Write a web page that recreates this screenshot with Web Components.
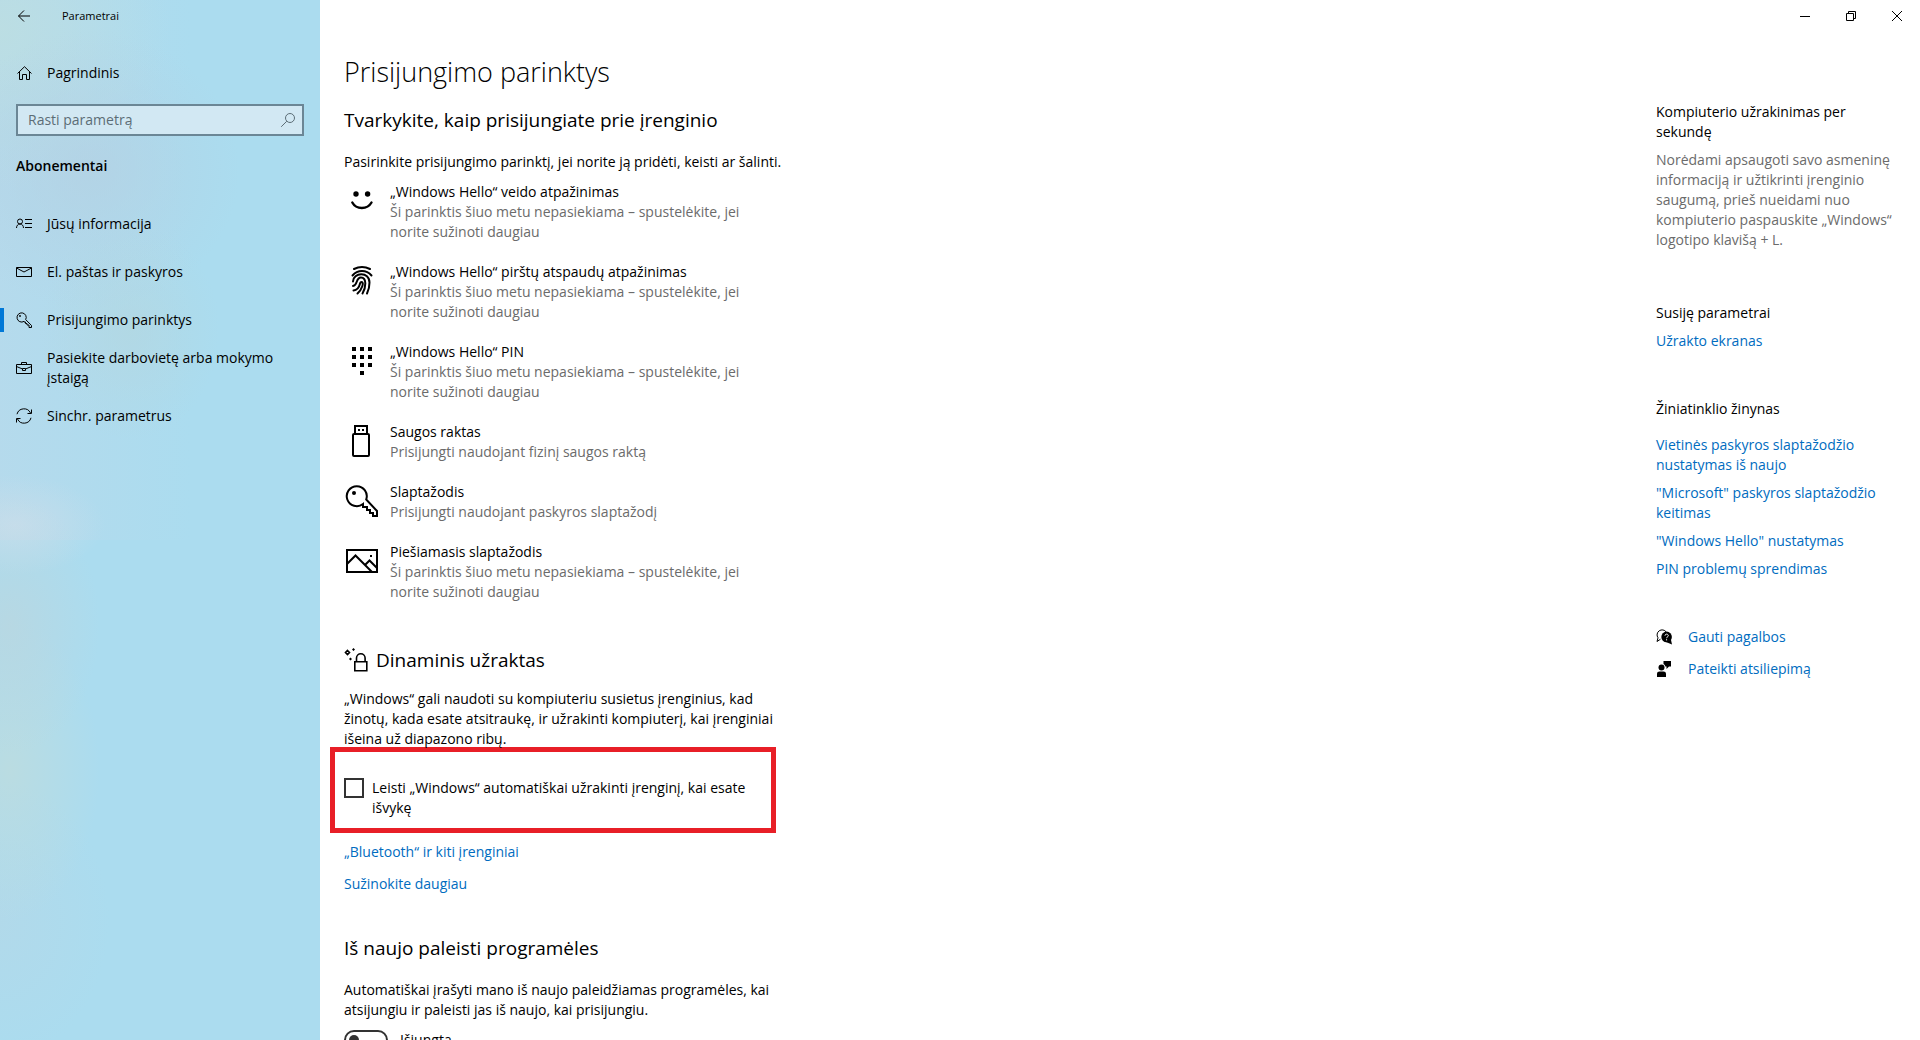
<!DOCTYPE html>
<html lang="lt">
<head>
<meta charset="utf-8">
<meta name="viewport" content="width=device-width, initial-scale=1">
<title>Parametrai</title>
<style>
  html, body {
    height: 100%;
    margin: 0;
  }

  body {
    font-family: "Open Sans", "Noto Sans", sans-serif;
    font-size: 14px;
    line-height: 20px;
    color: #000;
    background: #fff;
    overflow: hidden;
    --link: #006cc0;
    --muted: #6b6b6b;
  }
</style>
</head>
<body>

<settings-window>
  <settings-sidebar slot="sidebar">
    <nav-item icon="home" slot="home">Pagrindinis</nav-item>
    <nav-item icon="contact">Jūsų informacija</nav-item>
    <nav-item icon="mail">El. paštas ir paskyros</nav-item>
    <nav-item icon="key" active>Prisijungimo parinktys</nav-item>
    <nav-item icon="briefcase">Pasiekite darbovietę arba mokymo įstaigą</nav-item>
    <nav-item icon="sync">Sinchr. parametrus</nav-item>
  </settings-sidebar>

  <span slot="title">Prisijungimo parinktys</span>

  <settings-section>
    <span slot="heading">Tvarkykite, kaip prisijungiate prie įrenginio</span>
    <span slot="intro">Pasirinkite prisijungimo parinktį, jei norite ją pridėti, keisti ar šalinti.</span>
    <signin-option icon="face">„Windows Hello“ veido atpažinimas
      <span slot="note">Ši parinktis šiuo metu nepasiekiama – spustelėkite, jei norite sužinoti daugiau</span>
    </signin-option>
    <signin-option icon="fingerprint">„Windows Hello“ pirštų atspaudų atpažinimas
      <span slot="note">Ši parinktis šiuo metu nepasiekiama – spustelėkite, jei norite sužinoti daugiau</span>
    </signin-option>
    <signin-option icon="pin">„Windows Hello“ PIN
      <span slot="note">Ši parinktis šiuo metu nepasiekiama – spustelėkite, jei norite sužinoti daugiau</span>
    </signin-option>
    <signin-option icon="usb">Saugos raktas
      <span slot="note">Prisijungti naudojant fizinį saugos raktą</span>
    </signin-option>
    <signin-option icon="bigkey">Slaptažodis
      <span slot="note">Prisijungti naudojant paskyros slaptažodį</span>
    </signin-option>
    <signin-option icon="picture">Piešiamasis slaptažodis
      <span slot="note">Ši parinktis šiuo metu nepasiekiama – spustelėkite, jei norite sužinoti daugiau</span>
    </signin-option>
  </settings-section>

  <settings-section icon="lock">
    <span slot="heading">Dinaminis užraktas</span>
    <span slot="intro">„Windows“ gali naudoti su kompiuteriu susietus įrenginius, kad žinotų, kada esate atsitraukę, ir užrakinti kompiuterį, kai įrenginiai išeina už diapazono ribų.</span>
    <check-option>Leisti „Windows“ automatiškai užrakinti įrenginį, kai esate išvykę</check-option>
    <text-link wide>„Bluetooth“ ir kiti įrenginiai</text-link>
    <text-link wide>Sužinokite daugiau</text-link>
  </settings-section>

  <settings-section>
    <span slot="heading">Iš naujo paleisti programėles</span>
    <span slot="intro">Automatiškai įrašyti mano iš naujo paleidžiamas programėles, kai atsijungiu ir paleisti jas iš naujo, kai prisijungiu.</span>
    <toggle-switch>Išjungta</toggle-switch>
  </settings-section>

  <help-group slot="aside">
    <span slot="heading">Kompiuterio užrakinimas per sekundę</span>
    <help-note>Norėdami apsaugoti savo asmeninę informaciją ir užtikrinti įrenginio saugumą, prieš nueidami nuo kompiuterio paspauskite „Windows“ logotipo klavišą + L.</help-note>
  </help-group>
  <help-group slot="aside">
    <span slot="heading">Susiję parametrai</span>
    <text-link>Užrakto ekranas</text-link>
  </help-group>
  <help-group slot="aside" spaced>
    <span slot="heading">Žiniatinklio žinynas</span>
    <text-link>Vietinės paskyros slaptažodžio nustatymas iš naujo</text-link>
    <text-link>"Microsoft" paskyros slaptažodžio keitimas</text-link>
    <text-link>"Windows Hello" nustatymas</text-link>
    <text-link>PIN problemų sprendimas</text-link>
  </help-group>
  <help-group slot="aside">
    <text-link icon="help" wide>Gauti pagalbos</text-link>
    <text-link icon="feedback" wide>Pateikti atsiliepimą</text-link>
  </help-group>
</settings-window>

<script>
// name: [size, shapes]
const icons = {
  back: [16, '<path d="M14 8H2.5M8 2.5 2.5 8 8 13.5"/>'],
  minimize: [10, '<path d="M0 5.5h10"/>'],
  restore: [10, '<path d="M.5 2.5h7v7h-7zM2.5 2.5v-2h7v7h-2"/>'],
  close: [10, '<path d="M0 0l10 10M10 0 0 10"/>'],
  home: [16, '<path d="M1.5 8.5l7-6.8 7 6.8M3.5 7v7.5h3v-5h4v5h3V7"/>'],
  search: [16, '<circle cx="10" cy="6" r="4.5"/><path d="M6.8 9.2 1.2 14.8"/>'],
  contact: [16, '<circle cx="4" cy="5.5" r="2.5"/><path d="M.5 12c0-2.4 1.5-4 3.5-4s3.5 1.6 3.5 4M9 3.5h7M9 7.5h7M9 11.5h7"/>'],
  mail: [16, '<path d="M.5 3.5h15v9H.5zM.5 4 8 8l7.5-4"/>'],
  key: [16, '<path d="M8 10h1.5v1.5H11V13h2v2.5h2.5v-2L9.7 7.6A4.6 4.6 0 1 0 8 9.4z"/><circle cx="4" cy="4" r=".6"/>'],
  briefcase: [16, '<path d="M.5 4.5h15v9H.5zM5.5 4.5v-2h5v2M.5 6.5l6 2.5M15.5 6.5l-6 2.5M6.5 8.5h3v2h-3z"/>'],
  sync: [16, '<path d="M1 6.2A7.2 7.2 0 0 1 14.5 5M15.5 1.5v4h-4M15 9.8A7.2 7.2 0 0 1 1.5 11M.5 14.5v-4h4"/>'],
  face: [32, '<g fill="currentColor" stroke="none"><circle cx="10" cy="9" r="2.7"/><circle cx="21.6" cy="9" r="2.7"/></g><path stroke-width="2.4" stroke-linecap="round" d="M6.3 17.5c4 7.3 15 7.3 19.2 0"/>'],
  fingerprint: [32, '<g stroke-width="2" stroke-linecap="round"><path d="M8 4c5-2.5 11-2.5 16 0M6.5 10.5c5-6 14-6 19 0"/><path d="M7 16.5c0-9 16.5-10.5 16.5 1 0 4-1 8-2.5 11"/><path d="M7 21c5-.5 2.5-8.5 8-8.5 6 0 5 10 1.5 16"/><path d="M7.5 25.5c8-1 5-8.5 8-8.5s.5 7.5-4 11.5"/></g>'],
  pin: [32, '<path fill="currentColor" stroke="none" d="M6 2h4v4H6zM14 2h4v4h-4zM22 2h4v4h-4zM6 10h4v4H6zM14 10h4v4h-4zM22 10h4v4h-4zM6 18h4v4H6zM14 18h4v4h-4zM22 18h4v4h-4zM14 26h4v4h-4z"/>'],
  usb: [32, '<g stroke-width="2"><path d="M9 9V1h12v8"/><rect x="7" y="9" width="16" height="22" rx="1"/></g><path fill="currentColor" stroke="none" d="M12 4h2v2h-2zM16 4h2v2h-2z"/>'],
  bigkey: [32, '<path stroke-width="2" d="M17 19v3h4v3h3v3h3v3h4v-5L20.2 14.5A10 10 0 1 0 17 19z"/><circle cx="8" cy="8" r="2" fill="currentColor" stroke="none"/>'],
  picture: [32, '<path stroke-width="2" d="M1 5h30v22H1zM1 19l8.5-8.5L26 27M19 20l4.5-4.5L31 23"/><path fill="currentColor" stroke="none" d="M24 10h2v2h-2z"/>'],
  lock: [24, '<g stroke-width="1.6"><path d="M10.8 13.8h12v9h-12zM12.5 13.5V10a4.3 4.3 0 0 1 8.6 0v3.5"/><path d="m3.5 2.5 2 2-2 2-2-2z"/></g><path fill="currentColor" stroke="none" d="m9.5 0 1.5 1.5L9.500 3 8 1.500zM6.500 9.500 8 11l-1.500 1.500L5 11z"/>'],
  help: [16, '<path d="M4.5 10.2 1 12.5l1-3.7A4.8 4.8 0 1 1 10.2 3"/><circle cx="10.6" cy="7.9" r="5.3" fill="currentColor" stroke="none"/><path fill="currentColor" stroke="none" d="m10 13 6 2.5L14.8 10z"/><path stroke="#fff" d="M9 6.7c0-2.2 3.3-2 3.3 0 0 1.2-1.7 1.1-1.7 2.5M10.6 10.2v1.2"/>'],
  feedback: [16, '<g fill="currentColor" stroke="none"><circle cx="5.5" cy="6.5" r="3"/><path d="M1 16v-3c0-1.7 1-2.5 2.5-2.5h4c1.5 0 2.5.8 2.5 2.5v3zM7.500 0H15v5.500h-2L10.500 8V5.500H9.400A4 4 0 0 0 7.500 3z"/></g>']
}

class UiIcon extends HTMLElement {
  constructor () {
    super()
    this.attachShadow({ mode: 'open' })
  }

  connectedCallback () {
    const [size, shape] = icons[this.getAttribute('name')]

    this.shadowRoot.innerHTML =
      /* html */`
      <style>
      :host {
        display: block;
        flex: none;
      }

      svg {
        display: block;
        overflow: visible;
      }
      </style>

      <svg width="${size}" height="${size}" viewBox="0 0 ${size} ${size}" fill="none" stroke="currentColor" aria-hidden="true">${shape}</svg>
      `
  }
}

class SettingsWindow extends HTMLElement {
  constructor () {
    super()
    this.attachShadow({ mode: 'open' })
  }

  connectedCallback () {
    this.shadowRoot.innerHTML =
      /* html */`
      <style>
      :host {
        display: grid;
        grid-template-columns: 320px 1fr;
        height: 100vh;
      }

      main {
        display: flex;
        flex-direction: column;
        min-width: 0;
        min-height: 0;
      }

      .controls {
        display: flex;
        justify-content: flex-end;
        flex: none;
      }

      .controls button {
        display: grid;
        place-items: center;
        width: 46px;
        height: 32px;
        padding: 0;
        border: none;
        background: none;
        color: inherit;
      }

      .page {
        display: flex;
        justify-content: space-between;
        flex: 1;
        min-height: 0;
        padding: 0 24px;
        overflow-y: auto;
        scrollbar-width: none;
      }

      .content {
        max-width: 448px;
        padding-top: 20px;
      }

      h1 {
        margin: 0 0 14px;
        font-size: 27px;
        font-weight: 300;
        line-height: 40px;
      }

      aside {
        flex: none;
        width: 240px;
        padding-top: 70px;
      }
      </style>

      <slot name="sidebar"></slot>
      <main>
        <div class="controls">
          <button aria-label="Sumažinti"><ui-icon name="minimize"></ui-icon></button>
          <button aria-label="Atkurti"><ui-icon name="restore"></ui-icon></button>
          <button aria-label="Uždaryti"><ui-icon name="close"></ui-icon></button>
        </div>
        <div class="page">
          <div class="content">
            <h1><slot name="title"></slot></h1>
            <slot></slot>
          </div>
          <aside><slot name="aside"></slot></aside>
        </div>
      </main>
      `
  }
}

class SettingsSidebar extends HTMLElement {
  constructor () {
    super()
    this.attachShadow({ mode: 'open' })
  }

  connectedCallback () {
    this.shadowRoot.innerHTML =
      /* html */`
      <style>
      :host {
        display: block;
        background:
          radial-gradient(90px 50px at 15px 525px, rgba(204, 222, 234, .7), transparent),
          radial-gradient(90px 130px at 10px 625px, rgba(188, 214, 222, .7), transparent),
          radial-gradient(90px 150px at 10px 770px, rgba(190, 220, 222, .8), transparent),
          radial-gradient(110px 140px at 0 920px, rgba(180, 216, 232, .7), transparent),
          radial-gradient(90px 110px at 130px 330px, rgba(180, 214, 222, .6), transparent),
          radial-gradient(150px 140px at 90px 170px, rgba(180, 208, 226, .7), transparent),
          radial-gradient(170px 160px at 0 30px, rgba(188, 222, 226, .9), transparent),
          linear-gradient(90deg, rgba(182, 218, 236, .9), transparent 60%) 0 0 / 100% 540px no-repeat,
          #abdcef;
      }

      .bar {
        display: flex;
        align-items: center;
        height: 32px;
        font-size: 11px;
      }

      .bar button {
        display: grid;
        place-items: center;
        width: 48px;
        height: 32px;
        margin-right: 14px;
        padding: 0;
        border: none;
        background: none;
        color: inherit;
      }

      .home {
        padding: 17px 0 7px;
      }

      .search {
        display: flex;
        align-items: center;
        box-sizing: border-box;
        height: 32px;
        margin: 0 16px;
        padding: 0 6px 0 10px;
        border: 2px solid #6b8695;
        background: #d2e8f3;
        color: #5c6d76;
      }

      input {
        flex: 1;
        min-width: 0;
        padding: 0;
        border: none;
        outline: none;
        background: none;
        font: inherit;
      }

      input::placeholder {
        color: #5c6d76;
        opacity: 1;
      }

      h2 {
        margin: 20px 16px 24px;
        font-size: 14px;
        font-weight: 600;
        line-height: 20px;
      }
      </style>

      <div class="bar">
        <button aria-label="Atgal"><ui-icon name="back"></ui-icon></button>
        <span>Parametrai</span>
      </div>
      <div class="home"><slot name="home"></slot></div>
      <div class="search">
        <input type="text" placeholder="Rasti parametrą" aria-label="Rasti parametrą">
        <ui-icon name="search"></ui-icon>
      </div>
      <h2>Abonementai</h2>
      <nav><slot></slot></nav>
      `
  }
}

class NavItem extends HTMLElement {
  constructor () {
    super()
    this.attachShadow({ mode: 'open' })
  }

  connectedCallback () {
    this.shadowRoot.innerHTML =
      /* html */`
      <style>
      :host {
        display: block;
      }

      a {
        display: flex;
        align-items: center;
        gap: 15px;
        height: 48px;
        padding: 0 40px 0 16px;
        color: inherit;
        text-decoration: none;
      }

      /* accent bar of the current page */
      :host([active]) a::before {
        content: "";
        width: 4px;
        height: 24px;
        margin: 0 -3px 0 -16px;
        background: #0078d7;
      }
      </style>

      <a href="#"><ui-icon name="${this.getAttribute('icon')}"></ui-icon><span><slot></slot></span></a>
      `
  }
}

class SettingsSection extends HTMLElement {
  constructor () {
    super()
    this.attachShadow({ mode: 'open' })
  }

  connectedCallback () {
    const icon = this.getAttribute('icon')

    this.shadowRoot.innerHTML =
      /* html */`
      <style>
      :host {
        display: block;
        margin-bottom: 44px;
      }

      h2 {
        display: flex;
        align-items: center;
        gap: 8px;
        margin: 0 0 18px;
        font-size: 19px;
        font-weight: 400;
        line-height: 28px;
      }

      p {
        margin: 0 0 10px;
      }

      :host([icon]) {
        margin-bottom: 40px;
      }

      :host([icon]) h2 {
        margin-bottom: 15px;
      }
      </style>

      <h2>${icon ? `<ui-icon name="${icon}"></ui-icon>` : ''}<slot name="heading"></slot></h2>
      <p><slot name="intro"></slot></p>
      <slot></slot>
      `
  }
}

class SigninOption extends HTMLElement {
  constructor () {
    super()
    this.attachShadow({ mode: 'open' })
  }

  connectedCallback () {
    this.shadowRoot.innerHTML =
      /* html */`
      <style>
      :host {
        display: block;
        margin-bottom: 20px;
      }

      button {
        display: flex;
        align-items: flex-start;
        gap: 12px;
        width: 100%;
        padding: 0 32px 0 2px;
        border: none;
        background: none;
        color: inherit;
        font: inherit;
        text-align: left;
      }

      ui-icon {
        padding-top: 3px;
      }

      .note {
        display: block;
        color: var(--muted);
      }
      </style>

      <button>
        <ui-icon name="${this.getAttribute('icon')}"></ui-icon>
        <span><slot></slot><span class="note"><slot name="note"></slot></span></span>
      </button>
      `
  }
}

class CheckOption extends HTMLElement {
  constructor () {
    super()
    this.attachShadow({ mode: 'open' })
  }

  connectedCallback () {
    this.shadowRoot.innerHTML =
      /* html */`
      <style>
      :host {
        display: block;
        margin: -12px 16px 9px -14px;
        padding: 26px 10px 10px 9px;
        border: 5px solid #e81f27;
      }

      label {
        display: flex;
        align-items: flex-start;
        gap: 8px;
      }

      input {
        appearance: none;
        box-sizing: border-box;
        flex: none;
        width: 20px;
        height: 20px;
        margin: 0;
        border: 2px solid #333;
        background: #fff;
      }

      input:checked {
        background: #0078d7;
      }
      </style>

      <label for="lock"><input type="checkbox" id="lock"><span><slot></slot></span></label>
      `
  }
}

class ToggleSwitch extends HTMLElement {
  constructor () {
    super()
    this.attachShadow({ mode: 'open' })
  }

  connectedCallback () {
    this.shadowRoot.innerHTML =
      /* html */`
      <style>
      :host {
        display: block;
      }

      label {
        display: flex;
        align-items: center;
        gap: 12px;
      }

      input {
        appearance: none;
        box-sizing: border-box;
        display: flex;
        align-items: center;
        width: 44px;
        height: 20px;
        margin: 0;
        padding: 0 3px;
        border: 2px solid #333;
        border-radius: 10px;
      }

      input::before {
        content: "";
        width: 10px;
        height: 10px;
        border-radius: 50%;
        background: #333;
      }

      input:checked {
        justify-content: flex-end;
      }
      </style>

      <label for="restart"><input type="checkbox" role="switch" id="restart"><span><slot></slot></span></label>
      `
  }
}

class TextLink extends HTMLElement {
  constructor () {
    super()
    this.attachShadow({ mode: 'open' })
  }

  connectedCallback () {
    const icon = this.getAttribute('icon')

    this.shadowRoot.innerHTML =
      /* html */`
      <style>
      :host {
        display: flex;
        align-items: center;
        gap: 16px;
        margin-bottom: 8px;
      }

      :host([wide]) {
        margin-bottom: 12px;
      }

      a {
        color: var(--link);
        text-decoration: none;
      }

      a:hover {
        color: var(--muted);
      }
      </style>

      ${icon ? `<ui-icon name="${icon}"></ui-icon>` : ''}<a href="#"><slot></slot></a>
      `
  }
}

class HelpNote extends HTMLElement {
  constructor () {
    super()
    this.attachShadow({ mode: 'open' })
  }

  connectedCallback () {
    this.shadowRoot.innerHTML =
      /* html */`
      <style>
      :host {
        display: block;
        margin-bottom: 53px;
        color: var(--muted);
      }
      </style>

      <slot></slot>
      `
  }
}

class HelpGroup extends HTMLElement {
  constructor () {
    super()
    this.attachShadow({ mode: 'open' })
  }

  connectedCallback () {
    this.shadowRoot.innerHTML =
      /* html */`
      <style>
      :host {
        display: block;
        margin-bottom: 48px;
      }

      h3 {
        margin: 0;
        font-size: 14px;
        font-weight: 400;
        line-height: 20px;
      }

      ::slotted([slot="heading"]) {
        display: block;
        margin-bottom: 8px;
      }

      :host([spaced]) ::slotted([slot="heading"]) {
        margin-bottom: 16px;
      }
      </style>

      <h3><slot name="heading"></slot></h3>
      <slot></slot>
      `
  }
}

customElements.define('ui-icon', UiIcon)
customElements.define('settings-window', SettingsWindow)
customElements.define('settings-sidebar', SettingsSidebar)
customElements.define('nav-item', NavItem)
customElements.define('settings-section', SettingsSection)
customElements.define('signin-option', SigninOption)
customElements.define('check-option', CheckOption)
customElements.define('toggle-switch', ToggleSwitch)
customElements.define('text-link', TextLink)
customElements.define('help-note', HelpNote)
customElements.define('help-group', HelpGroup)
</script>
</body>
</html>
